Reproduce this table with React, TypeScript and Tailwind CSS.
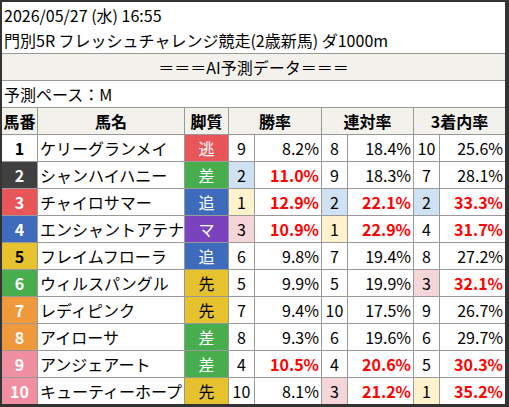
import React from "react";

type Row = {
  no: number;
  name: string;
  style: string;
  win: [number, string, boolean];
  ren: [number, string, boolean];
  fuku: [number, string, boolean];
};

const rows: Row[] = [
  { no: 1, name: "ケリーグランメイ", style: "逃", win: [9, "8.2%", false], ren: [8, "18.4%", false], fuku: [10, "25.6%", false] },
  { no: 2, name: "シャンハイハニー", style: "差", win: [2, "11.0%", true], ren: [9, "18.3%", false], fuku: [7, "28.1%", false] },
  { no: 3, name: "チャイロサマー", style: "追", win: [1, "12.9%", true], ren: [2, "22.1%", true], fuku: [2, "33.3%", true] },
  { no: 4, name: "エンシャントアテナ", style: "マ", win: [3, "10.9%", true], ren: [1, "22.9%", true], fuku: [4, "31.7%", true] },
  { no: 5, name: "フレイムフローラ", style: "追", win: [6, "9.8%", false], ren: [7, "19.4%", false], fuku: [8, "27.2%", false] },
  { no: 6, name: "ウィルスパングル", style: "先", win: [5, "9.9%", false], ren: [5, "19.9%", false], fuku: [3, "32.1%", true] },
  { no: 7, name: "レディピンク", style: "先", win: [7, "9.4%", false], ren: [10, "17.5%", false], fuku: [9, "26.7%", false] },
  { no: 8, name: "アイローサ", style: "差", win: [8, "9.3%", false], ren: [6, "19.6%", false], fuku: [6, "29.7%", false] },
  { no: 9, name: "アンジェアート", style: "差", win: [4, "10.5%", true], ren: [4, "20.6%", true], fuku: [5, "30.3%", true] },
  { no: 10, name: "キューティーホープ", style: "先", win: [10, "8.1%", false], ren: [3, "21.2%", true], fuku: [1, "35.2%", true] },
];

const frameColor: Record<number, string> = {
  1: "bg-white text-black",
  2: "bg-[#404040] text-white",
  3: "bg-[#e8565a] text-white",
  4: "bg-[#3f6bbd] text-white",
  5: "bg-[#e6c22e] text-black",
  6: "bg-[#47ad4d] text-white",
  7: "bg-[#f0993c] text-white",
  8: "bg-[#f0993c] text-white",
  9: "bg-[#f08fa2] text-white",
  10: "bg-[#f08fa2] text-white",
};

const styleColor: Record<string, string> = {
  逃: "bg-[#e8565a] text-white",
  差: "bg-[#47ad4d] text-white",
  追: "bg-[#3f6bbd] text-white",
  マ: "bg-[#7a42bf] text-white",
  先: "bg-[#e6c22e] text-black",
};

const rankBg = (r: number) =>
  r === 1 ? "bg-[#fff2cc]" : r === 2 ? "bg-[#cfe2f3]" : r === 3 ? "bg-[#f4d6d9]" : "bg-white";

function RateCells({ v }: { v: [number, string, boolean] }) {
  return (
    <>
      <div className={`${rankBg(v[0])} flex items-center justify-center`}>{v[0]}</div>
      <div
        className={`bg-white flex items-center justify-end pr-[2px] ${
          v[2] ? "text-[#ff0000] font-bold" : ""
        }`}
      >
        {v[1]}
      </div>
    </>
  );
}

export default function App() {
  return (
    <div className="w-[509px] h-[407px] bg-white border-t-2 border-l-2 border-r-4 border-b-[3px] border-[#333] font-['Noto_Sans_CJK_JP','Noto_Sans',sans-serif] text-[16px] text-black overflow-hidden">
      {/* Title */}
      <div className="h-[51px] pl-[2px] flex flex-col justify-center leading-[25px]">
        <div>2026/05/27 (水) 16:55</div>
        <div>門別5R フレッシュチャレンジ競走(2歳新馬) ダ1000m</div>
      </div>
      <div className="h-[28px] border-y border-[#999] bg-[#f2f1ec] flex items-center justify-center">
        ＝＝＝AI予測データ＝＝＝
      </div>
      <div className="h-[26px] pl-[2px] flex items-center">予測ペース：M</div>

      {/* Table */}
      <div className="grid grid-cols-[35px_146px_43px_25px_66px_25px_65px_25px_65px] auto-rows-[26px] gap-px bg-[#999] border-t border-[#999]">
        <div className="bg-[#f2f1ec] font-bold flex items-center justify-center">馬番</div>
        <div className="bg-[#f2f1ec] font-bold flex items-center justify-center">馬名</div>
        <div className="bg-[#f2f1ec] font-bold flex items-center justify-center">脚質</div>
        <div className="col-span-2 bg-[#f2f1ec] font-bold flex items-center justify-center">勝率</div>
        <div className="col-span-2 bg-[#f2f1ec] font-bold flex items-center justify-center">連対率</div>
        <div className="col-span-2 bg-[#f2f1ec] font-bold flex items-center justify-center">3着内率</div>

        {rows.map((r) => (
          <React.Fragment key={r.no}>
            <div className={`${frameColor[r.no]} font-bold flex items-center justify-center`}>{r.no}</div>
            <div className="bg-white flex items-center pl-[2px] whitespace-nowrap">{r.name}</div>
            <div className={`${styleColor[r.style]} flex items-center justify-center`}>{r.style}</div>
            <RateCells v={r.win} />
            <RateCells v={r.ren} />
            <RateCells v={r.fuku} />
          </React.Fragment>
        ))}
      </div>
    </div>
  );
}
